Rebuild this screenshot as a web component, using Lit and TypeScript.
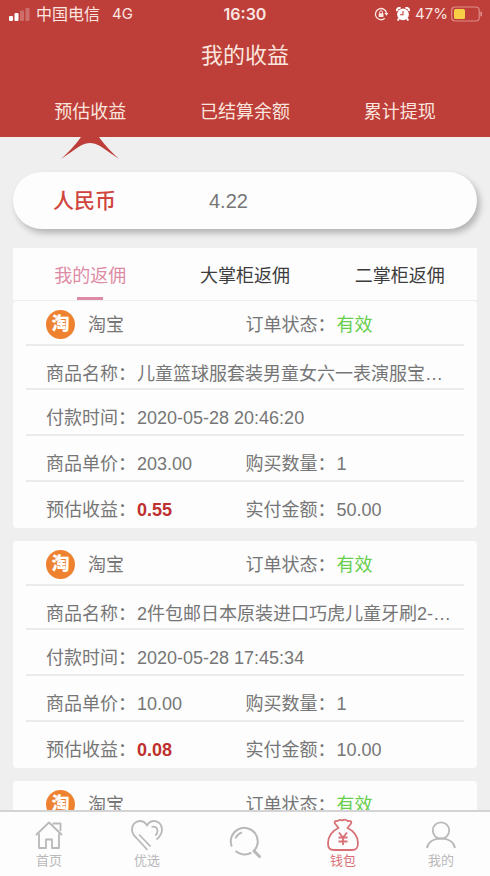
import { LitElement, html, css, svg, nothing } from "lit";
import { customElement, property, state } from "lit/decorators.js";
import { classMap } from "lit/directives/class-map.js";

interface Order {
  name: string;
  paidAt: string;
  price: string;
  count: string;
  income: string;
  paid: string;
}

const ORDERS: Order[] = [
  { name: "儿童篮球服套装男童女六一表演服宝…", paidAt: "2020-05-28 20:46:20", price: "203.00", count: "1", income: "0.55", paid: "50.00" },
  { name: "2件包邮日本原装进口巧虎儿童牙刷2-…", paidAt: "2020-05-28 17:45:34", price: "10.00", count: "1", income: "0.08", paid: "10.00" },
  { name: "", paidAt: "", price: "", count: "", income: "", paid: "" },
];

@customElement("status-bar")
class StatusBar extends LitElement {
  static styles = css`
    :host {
      display: grid;
      grid-template-columns: 1fr auto 1fr;
      align-items: center;
      height: 28px;
      padding: 0 8px;
      font: 16px/20px Inter, "Noto Sans CJK SC", sans-serif;
      color: #fbe6e2;
    }
    .left, .right { display: flex; align-items: center; }
    .signal { margin-right: 6px; }
    .network { margin-left: 12px; font-size: 15px; }
    .time { font-weight: 600; }
    .right { justify-content: flex-end; gap: 3px; font-size: 15px; }
    .lock { margin-right: 4px; }
    .alarm { margin-right: 2px; }
    svg { display: block; }
  `;
  render() {
    return html`
      <div class="left">
        <svg class="signal" width="22" height="13" viewBox="0 0 22 13" fill="#fff">
          <rect x="1" y="8" width="4" height="5" rx="1" />
          <rect x="6.500" y="5" width="4" height="8" rx="1" />
          <rect x="12" y="2.500" width="4" height="10.500" rx="1" opacity=".25" />
          <rect x="17.500" y="0" width="4" height="13" rx="1" opacity=".25" />
        </svg>
        <span>中国电信</span><span class="network">4G</span>
      </div>
      <span class="time">16:30</span>
      <div class="right">
        <svg class="lock" width="15" height="14" viewBox="0 0 15 14" fill="none" stroke="#fbe6e2" stroke-width="1.300">
          <path d="M10.800 11.300A5.600 5.600 0 1 1 12.600 6.300" />
          <path d="M10.400 6h4l-2 2.800z" fill="#fbe6e2" stroke="none" />
          <rect x="4.700" y="6.200" width="4.800" height="3.800" rx=".5" fill="#fbe6e2" stroke="none" />
          <path d="M5.700 6.500V5.200a1.400 1.400 0 0 1 2.800 0v1.300" stroke-width="1" />
        </svg>
        <svg class="alarm" width="14" height="14" viewBox="0 0 14 14">
          <circle cx="7" cy="7.300" r="5.900" fill="#fff" />
          <path d="M.8 4.200A3 3 0 0 1 4.600 1M9.400 1a3 3 0 0 1 3.800 3.200M3 11.500l-1.300 2M11 11.500l1.300 2" stroke="#fff" stroke-width="2" fill="none" />
          <path d="M7 4v3.700H4" stroke="#c03e39" stroke-width="1.100" fill="none" />
        </svg>
        <span>47%</span>
        <svg width="31" height="16" viewBox="0 0 31 16">
          <rect x=".7" y="1" width="27.500" height="14" rx="3.500" fill="none" stroke="#df8d88" stroke-width="1.200" />
          <rect x="3" y="3" width="11" height="10" rx="1.500" fill="#f7cf46" />
          <path d="M29.300 5.500a2.500 2.500 0 0 1 0 5z" fill="#df8d88" />
        </svg>
      </div>
    `;
  }
}

@customElement("order-card")
class OrderCard extends LitElement {
  @property({ attribute: false }) order!: Order;
  static styles = css`
    :host {
      display: block;
      background: #fdfdfd;
      border-radius: 4px;
      padding: 0 13px;
      color: #767676;
    }
    .head, .row {
      display: grid;
      grid-template-columns: 199fr 218fr;
      padding: 16px 0 4px 20px;
      line-height: 24px;
      border-bottom: 2px solid #ebebeb;
      white-space: nowrap;
    }
    .head { padding: 9px 0 6px 20px; height: 28px; align-items: center; }
    .row.name { padding-bottom: 2px; }
    .row.last { padding-bottom: 6px; border-bottom: 0; }
    .wide { grid-column: 1 / -1; overflow: hidden; text-overflow: ellipsis; }
    .shop { display: flex; align-items: center; gap: 13px; }
    .logo {
      width: 29px;
      height: 29px;
      border-radius: 50%;
      background: #ee8230;
      color: #fff;
      font-size: 18px;
      line-height: 29px;
      font-weight: 900;
      text-align: center;
    }
    .label { display: inline-block; width: 91px; }
    .valid { color: #67cf4c; }
    .income { color: #bf3030; font-weight: 700; }
  `;
  private field(label: string, value: string, cls = "") {
    return html`<span class="label">${label}：</span><span class=${cls}>${value}</span>`;
  }
  render() {
    const o = this.order;
    return html`
      <div class="head">
        <div class="shop"><span class="logo">淘</span><span>淘宝</span></div>
        <div>${this.field("订单状态", "有效", "valid")}</div>
      </div>
      ${o.name
        ? html`
            <div class="row name"><div class="wide">${this.field("商品名称", o.name)}</div></div>
            <div class="row"><div class="wide">${this.field("付款时间", o.paidAt)}</div></div>
            <div class="row">
              <div>${this.field("商品单价", o.price)}</div>
              <div>${this.field("购买数量", o.count)}</div>
            </div>
            <div class="row last">
              <div>${this.field("预估收益", o.income, "income")}</div>
              <div>${this.field("实付金额", o.paid)}</div>
            </div>
          `
        : nothing}
    `;
  }
}

const NAV_ICONS = {
  home: svg`<path d="M3 17 16 4.500 29 17M6 15.500V30h7v-8.500h6V30h7V15.500M19.500 5.500h8V13" />`,
  heart: svg`<path d="M25.500 21.500C29 18.500 31 15.500 31 11.500 31 6.500 27.500 3 23 3c-3 0-5.300 1.500-7 4.500C14.300 4.500 12 3 9 3 4.500 3 1 6.500 1 11.500c0 3 1.500 5.500 4 8L16.500 32M8 16.500 19.500 28.500M20.500 9c3.500-1.200 6 .8 6 4 0 2-1 3.500-2.200 4.500" />`,
  purse: svg`<path d="M11.500 10 8 5.500c-1-2 .3-3 2.300-2.300 1.500-1.500 3.200-1.700 5-.7 1.700-1.200 4-.9 5.500.7 2.500-.7 4.200.3 3.200 2.300L20.500 10c6 2.500 10.500 8.500 10.500 15 0 5-1.500 7-6 7h-18c-4.500 0-6-2-6-7 0-6.500 4.500-12.500 10.500-15z" /><path d="m12 14.500 4 5 4-5M16 19.500v7.500M11.500 19.500h9M11.500 23.500h9" />`,
  user: svg`<circle cx="16" cy="12.500" r="8.200" /><path d="M2 30C3 24 8.500 20.500 16 20.500S29 24 30 30" />`,
};

@customElement("app-root")
class AppRoot extends LitElement {
  @state() private balanceTab = 0;
  @state() private rebateTab = 0;

  static styles = css`
    :host {
      display: flex;
      flex-direction: column;
      height: 100vh;
      background: #efefef;
      font: 18px/24px "Liberation Sans", "Noto Sans CJK SC", sans-serif;
    }
    button {
      appearance: none;
      border: 0;
      margin: 0;
      padding: 0;
      background: none;
      font: inherit;
      color: inherit;
      cursor: pointer;
    }
    .header { background: #be3e39; color: #fae5df; }
    .title {
      margin: 0;
      padding: 12px 0;
      font-size: 22px;
      line-height: 32px;
      font-weight: 400;
      text-align: center;
    }
    .tabs { display: grid; grid-template-columns: repeat(3, 1fr); }
    .balances { padding: 0 13px; }
    .balances button { position: relative; height: 53px; padding-top: 2px; }
    .pointer { position: absolute; top: 100%; left: 50%; margin-left: -30px; display: block; }
    .main {
      flex: 1;
      min-height: 0;
      overflow-y: auto;
      scrollbar-width: none;
      padding: 35px 13px 0;
    }
    .amount {
      display: grid;
      grid-template-columns: 196fr 268fr;
      align-items: center;
      height: 57px;
      border-radius: 29px;
      background: #fdfdfd;
      box-shadow: 3px 4px 6px rgba(0, 0, 0, 0.25);
      font-size: 20px;
      color: #767676;
    }
    .currency { padding-left: 40px; color: #d0463e; font-size: 21px; font-weight: 500; }
    .rebates { margin: 19px 0 1px; background: #fdfdfd; color: #3c3c3c; }
    .rebates button { height: 52px; display: flex; flex-direction: column; align-items: center; }
    .rebates button::before { content: ""; flex: none; height: 16px; }
    .rebates .active { color: #dd8ba5; }
    .rebates .active::after { content: ""; width: 26px; height: 3px; margin-top: auto; background: #dd8ba5; }
    .orders { display: grid; gap: 13px; }
    .nav {
      flex: none;
      display: grid;
      grid-template-columns: repeat(5, 1fr);
      box-sizing: border-box;
      height: 66px;
      border-top: 2px solid #d4d4d4;
      background: #fdfdfd;
      color: #b9b9b9;
      font-size: 13px;
      line-height: 18px;
    }
    .nav a {
      display: flex;
      flex-direction: column;
      align-items: center;
      justify-content: center;
      color: inherit;
      text-decoration: none;
    }
    .nav .current { color: #d87076; }
    .nav svg { display: block; fill: none; stroke: currentColor; stroke-width: 1.8; stroke-linejoin: round; }
  `;

  private navItem(label: string, icon: unknown, current = false) {
    return html`<a href="#" class=${classMap({ current })}>
      <svg width="32" height="34" viewBox="0 0 32 34">${icon}</svg><span>${label}</span>
    </a>`;
  }

  render() {
    return html`
      <header class="header">
        <status-bar></status-bar>
        <h1 class="title">我的收益</h1>
        <div class="tabs balances">
          ${["预估收益", "已结算余额", "累计提现"].map(
            (t, i) => html`<button @click=${() => (this.balanceTab = i)}>
              ${t}${i === this.balanceTab
                ? html`<svg class="pointer" width="60" height="22" viewBox="0 0 60 22">
                    <path fill="#be3e39" d="M21 0h18c5 7 12 15 20 22-7-5-13-9-19-13-7-4-13-4-20 0C14 13 8 17 1 22 9 15 16 7 21 0z" />
                  </svg>`
                : nothing}
            </button>`
          )}
        </div>
      </header>
      <main class="main">
        <section class="amount"><span class="currency">人民币</span><span>4.22</span></section>
        <div class="tabs rebates">
          ${["我的返佣", "大掌柜返佣", "二掌柜返佣"].map(
            (t, i) => html`<button class=${classMap({ active: i === this.rebateTab })} @click=${() => (this.rebateTab = i)}>${t}</button>`
          )}
        </div>
        <div class="orders">${ORDERS.map((o) => html`<order-card .order=${o}></order-card>`)}</div>
      </main>
      <nav class="nav">
        ${this.navItem("首页", NAV_ICONS.home)}
        ${this.navItem("优选", NAV_ICONS.heart)}
        <a href="#" aria-label="搜索">
          <svg width="32" height="36" viewBox="0 0 32 36">
            <path d="M2.800 20.500A13.500 13.500 0 1 1 24.500 25.200M22.500 26.700A13.500 13.500 0 0 1 6.500 25M6.500 12.500A10 10 0 0 1 13 6.500" stroke-width="2" />
            <path d="M25 25 30.500 30.500" stroke-width="3" stroke-linecap="round" />
          </svg>
        </a>
        ${this.navItem("钱包", NAV_ICONS.purse, true)}
        ${this.navItem("我的", NAV_ICONS.user)}
      </nav>
    `;
  }
}
